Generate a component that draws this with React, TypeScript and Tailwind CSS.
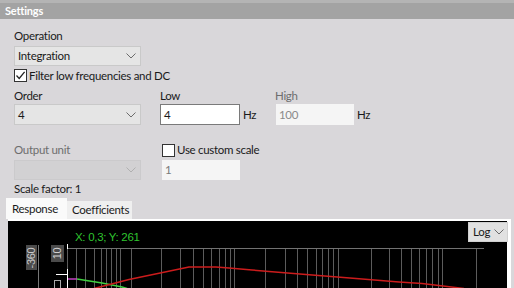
import React from "react";

const Chevron = ({ color = "#6b6b6b" }: { color?: string }) => (
  <svg width="10" height="6" viewBox="0 0 10 6" className="shrink-0">
    <path d="M0.5 0.5 L5 5 L9.5 0.5" fill="none" stroke={color} strokeWidth="1" />
  </svg>
);

const Select = ({
  value,
  disabled,
  h = 20,
}: {
  value: string;
  disabled?: boolean;
  h?: number;
}) => (
  <div
    className={
      "w-[127px] flex items-center justify-between pl-[3px] pr-[4px] border " +
      (disabled
        ? "bg-[#d2d1d3] border-[#cbcacc] text-[#8a8a8a]"
        : "bg-[#e5e5e5] border-[#c9c9c9] text-[#1a1a1a]") +
      (h === 21 ? " h-[21px]" : " h-[20px]")
    }
  >
    <span>{value}</span>
    <Chevron color={disabled ? "#b0b0b0" : "#6b6b6b"} />
  </div>
);

const Checkbox = ({ checked }: { checked?: boolean }) => (
  <div className="w-[13px] h-[13px] bg-white border border-[#333333] flex items-center justify-center shrink-0">
    {checked && (
      <svg width="11" height="11" viewBox="0 0 11 11">
        <path d="M1.5 5.5 L4.2 8.4 L9.6 1.8" fill="none" stroke="#222" strokeWidth="1.3" />
      </svg>
    )}
  </div>
);

const gridX = [
  68, 77, 86, 95, 102, 107, 112, 117, 121, 132, 162, 181, 194, 204, 212, 220, 226, 231, 235,
  266, 286, 298, 308, 317, 323, 329, 334, 339, 372, 390, 402, 412, 420, 427, 433, 439, 443, 477,
];

const Chart = () => (
  <svg width="499" height="67" viewBox="9 221 499 67" className="block">
    <rect x="9" y="221" width="499" height="67" fill="#000" />
    {gridX.map((x) => (
      <line key={x} x1={x + 0.5} y1="248" x2={x + 0.5} y2="288" stroke="#5c5c5c" strokeWidth="1" />
    ))}
    <line x1="68" y1="248.5" x2="485" y2="248.5" stroke="#727272" strokeWidth="1" />
    <line x1="39.5" y1="245" x2="39.5" y2="288" stroke="#777" strokeWidth="1" />
    <rect x="27" y="245" width="11" height="25" fill="#4b4b4b" />
    <text
      transform="translate(36 258) rotate(-90)"
      fontSize="11"
      fontFamily="'Liberation Sans', Arial, sans-serif"
      fill="#c9c9c9"
      textAnchor="middle"
    >
      -360
    </text>
    <rect x="52" y="245" width="13" height="17" fill="#4b4b4b" />
    <text
      transform="translate(62 253.5) rotate(-90)"
      fontSize="11"
      fontFamily="'Liberation Sans', Arial, sans-serif"
      fill="#d0d0d0"
      textAnchor="middle"
    >
      10
    </text>
    <line x1="68.5" y1="244" x2="68.5" y2="249" stroke="#fff" strokeWidth="1" />
    <line x1="68.5" y1="269" x2="68.5" y2="288" stroke="#fff" strokeWidth="1" />
    <line x1="57" y1="274.5" x2="68" y2="274.5" stroke="#fff" strokeWidth="1" />
    <rect x="55.5" y="280.5" width="6" height="9" fill="none" stroke="#aaa" strokeWidth="1" />
    <line x1="69" y1="279" x2="78" y2="279" stroke="#c040c0" strokeWidth="1.5" />
    <polyline
      points="78,279 103,283 123,287 128,288.5"
      fill="none"
      stroke="#40d040"
      strokeWidth="1.5"
    />
    <polyline
      points="95,288.5 130,279.5 190,267 217,267 230,268 253,270 270,271.5 307,274.5 357,278.5 400,282 423,283.5 465,288.5"
      fill="none"
      stroke="#cc1c1c"
      strokeWidth="1.5"
    />
    <text
      x="76"
      y="241"
      fontSize="11.5"
      fontFamily="'Liberation Sans', Arial, sans-serif"
      fill="#2fc42f"
    >
      X: 0,3; Y: 261
    </text>
  </svg>
);

export default function App() {
  return (
    <div className="w-[514px] h-[288px] overflow-hidden bg-[#d9d7da] font-['Lato',sans-serif] text-[11.5px] tracking-[-0.3px] leading-[16px] text-[#1a1a1a] flex flex-col">
      <div className="h-[19px] shrink-0 border-t-[3px] border-[#b4b4b4] bg-[#a3a3a3] pl-[5px] text-white font-bold text-[11px] tracking-[-0.2px] leading-[16px]">
        Settings
      </div>
      <div className="pl-[14px] flex flex-col shrink-0">
        <div className="mt-[9px] h-[16px]">Operation</div>
        <div className="mt-[2px]">
          <Select value="Integration" />
        </div>
        <div className="mt-[3px] flex items-center h-[13px] gap-[2px]">
          <Checkbox checked />
          <span>Filter low frequencies and DC</span>
        </div>
        <div className="mt-[6px] flex h-[16px]">
          <div className="w-[146px]">Order</div>
          <div className="w-[115px]">Low</div>
          <div className="text-[#6d6d6d]">High</div>
        </div>
        <div className="flex items-center h-[21px]">
          <Select value="4" h={21} />
          <div className="ml-[19px] w-[80px] h-[21px] bg-white border border-[#7a7a7a] pl-[3px] flex items-center">
            4
          </div>
          <span className="ml-[3px] w-[32px]">Hz</span>
          <div className="ml-[1px] w-[78px] h-[21px] bg-[#f5f5f5] pl-[3px] flex items-center text-[#8a8a8a]">
            100
          </div>
          <span className="ml-[3px]">Hz</span>
        </div>
        <div className="mt-[17px] flex h-[16px] items-center">
          <div className="w-[148px] text-[#6d6d6d]">Output unit</div>
          <div className="flex items-center gap-[2px]">
            <Checkbox />
            <span>Use custom scale</span>
          </div>
        </div>
        <div className="mt-[2px] flex items-center h-[20px]">
          <Select value="" disabled />
          <div className="ml-[21px] w-[78px] h-[20px] bg-[#f5f5f5] pl-[3px] flex items-center text-[#7a7a7a]">
            1
          </div>
        </div>
        <div className="mt-[1px] h-[16px]">Scale factor: 1</div>
      </div>
      <div className="mt-[1px] pl-[6px] flex items-end h-[21px] shrink-0">
        <div className="w-[61px] h-[21px] bg-[#fafafa] pl-[6px] flex items-center">Response</div>
        <div className="w-[65px] h-[18px] bg-[#efefef] pl-[5px] flex items-center">Coefficients</div>
      </div>
      <div className="ml-[8px] w-[503px] bg-white pt-[2px] pr-[4px] shrink-0 relative">
        <Chart />
        <div className="absolute left-[460px] top-[3px] w-[40px] h-[20px] bg-[#e1e1e1] border border-[#d0d0d0] flex items-center justify-between pl-[4px] pr-[3px]">
          <span>Log</span>
          <Chevron />
        </div>
      </div>
    </div>
  );
}
